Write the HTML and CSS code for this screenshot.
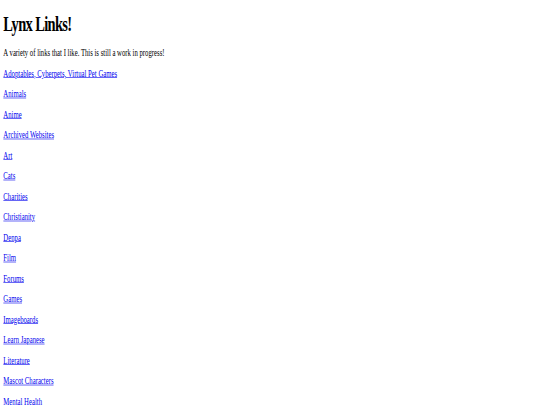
FILE: index.html
```html
<!DOCTYPE html>
<html lang="en">
<head>
    <meta charset="UTF-8">
    <meta name="viewport" content="width=device-width, initial-scale=1.0">
    <title>Lynx Links!</title>
    <link rel="stylesheet" href="styles.css">
</head>
<body>
    <div class="page">
        <h1>Lynx Links!</h1>
        <p>A variety of links that I like. This is still a work in progress!</p>
        <p><a href="adoptables.html">Adoptables, Cyberpets, Virtual Pet Games</a></p>
        <p><a href="animals.html">Animals</a></p>
        <p><a href="anime.html">Anime</a></p>
        <p><a href="archived.html">Archived Websites</a></p>
        <p><a href="art.html">Art</a></p>
        <p><a href="cats.html">Cats</a></p>
        <p><a href="charities.html">Charities</a></p>
        <p><a href="christianity.html">Christianity</a></p>
        <p><a href="denpa.html">Denpa</a></p>
        <p><a href="film.html">Film</a></p>
        <p><a href="forums.html">Forums</a></p>
        <p><a href="games.html">Games</a></p>
        <p><a href="imageboards.html">Imageboards</a></p>
        <p><a href="japanese.html">Learn Japanese</a></p>
        <p><a href="literature.html">Literature</a></p>
        <p><a href="mascots.html">Mascot Characters</a></p>
        <p><a href="mentalhealth.html">Mental Health</a></p>
    </div>
</body>
</html>
```

FILE: styles.css
```css
html, body {
    margin: 0;
    padding: 0;
    background-color: #ffffff;
    overflow: hidden;
}

/* page is drawn at desktop size, then shrunk to fit the small window */
.page {
    display: flow-root;
    width: 1264px;
    padding: 0 8px;
    font-family: "Liberation Serif", "Times New Roman", serif;
    font-size: 16px;
    color: #000000;
    transform: scale(0.42, 0.603);
    transform-origin: 0 0;
}

h1 {
    font-size: 34.4px;
    letter-spacing: -1.5px;
    margin: 19.5px 0 20.7px;
}

p {
    margin: 16px 0;
}

a {
    color: #0000ee;
}
```
